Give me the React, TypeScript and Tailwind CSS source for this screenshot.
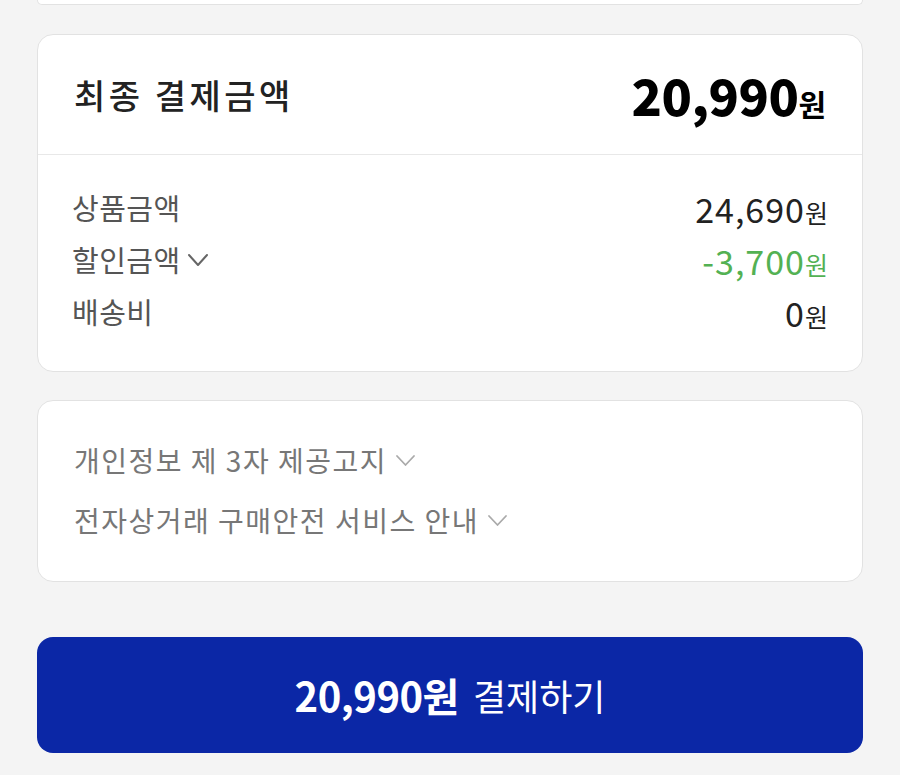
const font = { fontFamily: '"Noto Sans CJK KR", "Noto Sans", sans-serif' }

const Chevron = ({ w, h, color, stroke }: { w: number; h: number; color: string; stroke: number }) => (
  <svg width={w + 4} height={h + 4} viewBox={`-2 -2 ${w + 4} ${h + 4}`} fill="none">
    <polyline points={`0,0 ${w / 2},${h} ${w},0`} stroke={color} strokeWidth={stroke} strokeLinecap="round" strokeLinejoin="round" />
  </svg>
)

const Row = ({ label, value, green, chevron }: { label: string; value: string; green?: boolean; chevron?: boolean }) => (
  <div className="flex items-center justify-between h-[52px]">
    <div className="flex items-center gap-[6px] text-[29px] tracking-[0.5px] text-[#555555]">
      <span>{label}</span>
      {chevron && <Chevron w={18} h={10} color="#666666" stroke={2} />}
    </div>
    <div className={`flex items-baseline ${green ? 'text-[#53b153]' : 'text-[#222222]'}`}>
      <span className="text-[34px] tracking-[1px]">{value}</span>
      <span className="text-[25px]">원</span>
    </div>
  </div>
)

const Notice = ({ text }: { text: string }) => (
  <div className="flex items-center gap-[8px] h-[60px] text-[28px] tracking-[1.5px] text-[#777777]">
    <span>{text}</span>
    <Chevron w={17} h={9} color="#aaaaaa" stroke={1.8} />
  </div>
)

export default function App() {
  return (
    <div className="min-h-screen bg-[#f4f4f4] px-[37px]" style={font}>
      <div className="h-[5px] bg-white border-x-[1.5px] border-b-[1.5px] border-[#e2e2e2] rounded-b-[16px]" />

      <div className="mt-[29px] bg-white border-[1.5px] border-[#e2e2e2] rounded-[16px] overflow-hidden">
        <div className="flex items-center justify-between h-[120px] px-[36px] border-b-[1.5px] border-[#e8e8e8]">
          <span className="text-[34px] font-medium tracking-[3.5px] text-[#222222]">최종 결제금액</span>
          <div className="flex items-baseline text-black">
            <span className="text-[50px] font-black tracking-[-0.5px]">20,990</span>
            <span className="text-[30px] font-bold">원</span>
          </div>
        </div>
        <div className="px-[34px] pt-[27px] pb-[33px]">
          <Row label="상품금액" value="24,690" />
          <Row label="할인금액" value="-3,700" green chevron />
          <Row label="배송비" value="0" />
        </div>
      </div>

      <div className="mt-[28px] bg-white border-[1.5px] border-[#e2e2e2] rounded-[16px] px-[36px] pt-[29px] pb-[31px]">
        <Notice text="개인정보 제 3자 제공고지" />
        <Notice text="전자상거래 구매안전 서비스 안내" />
      </div>

      <div className="mt-[55px] pb-[22px]">
        <button className="w-full h-[116px] rounded-[16px] bg-[#0b27a6] text-white flex items-center justify-center gap-[14px]">
          <span className="text-[40px] font-bold tracking-[-0.5px]">20,990원</span>
          <span className="text-[36px]">결제하기</span>
        </button>
      </div>
    </div>
  )
}
